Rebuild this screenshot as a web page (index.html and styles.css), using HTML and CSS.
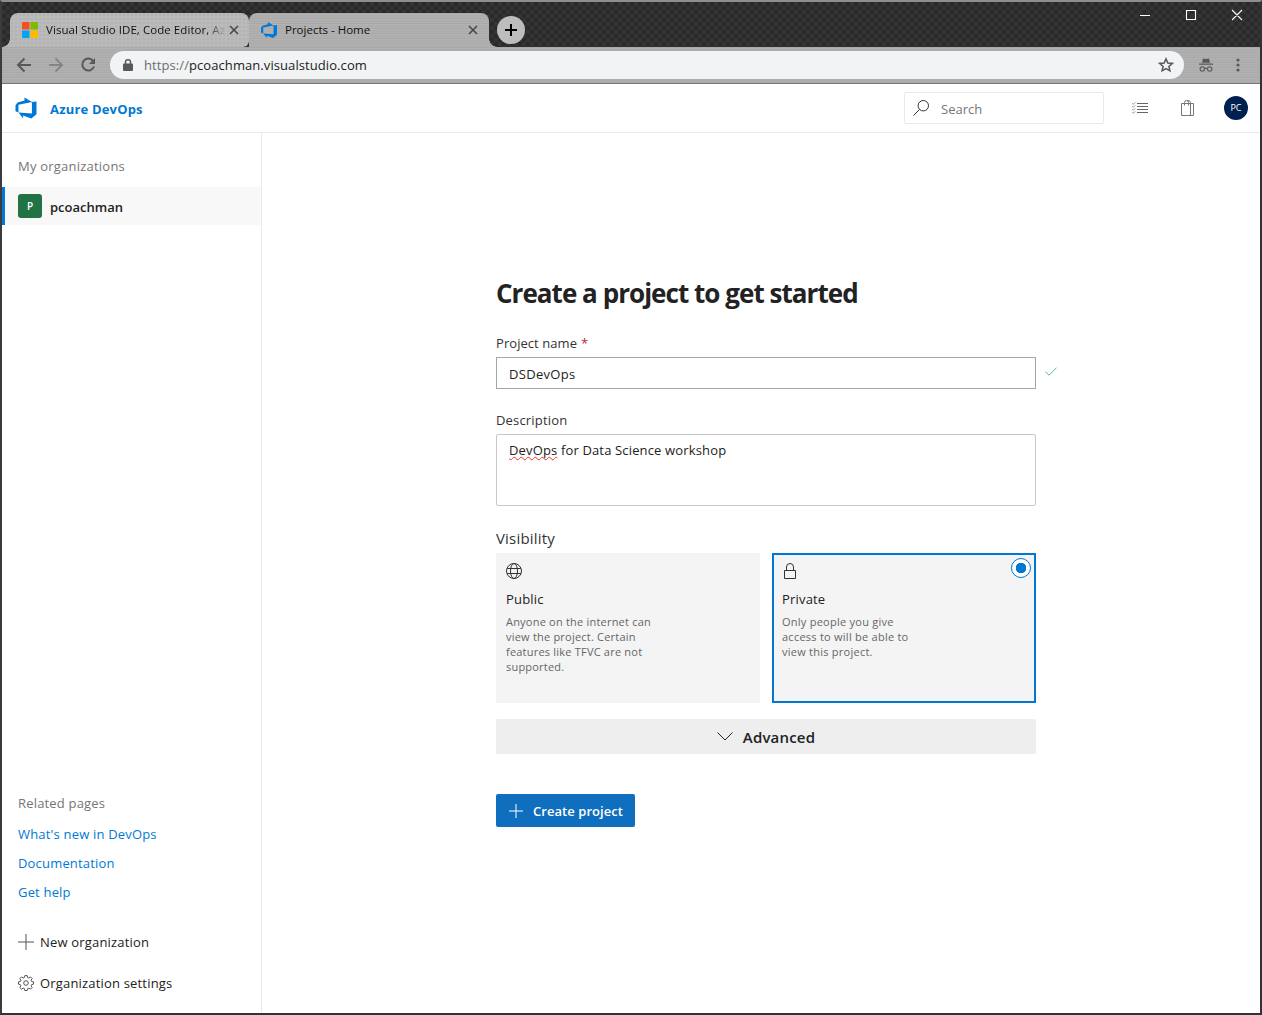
FILE: index.html
```html
<!DOCTYPE html>
<html lang="en">
<head>
<meta charset="utf-8">
<title>Projects - Home</title>
<link rel="stylesheet" href="styles.css">
</head>
<body>
<div class="window">
  <div class="titlebar">
    <div class="tabs">
      <div class="tab tab-inactive">
        <svg class="favicon windows" viewBox="0 0 16 16"><path fill="#f25022" d="M0 0h7.500v7.500H0z"/><path fill="#7fba00" d="M8.500 0H16v7.500H8.500z"/><path fill="#00a4ef" d="M0 8.500h7.500V16H0z"/><path fill="#ffb900" d="M8.500 8.500H16V16H8.500z"/></svg>
        <span class="tab-title tab-title-fade">Visual Studio IDE, Code Editor, Az</span>
        <svg class="tab-close" viewBox="0 0 10 10"><path d="M1 1l8 8M9 1l-8 8"/></svg>
      </div>
      <div class="tab tab-active">
        <svg class="favicon devops" viewBox="1 1 14 14"><path d="M15 3.622v8.512L11.5 15l-5.425-1.975v1.958L3.004 10.97l8.951.7V4.005L15 3.622zm-2.984.428L6.994 1v2.001L2.382 4.356 1 6.13v4.029l1.978.873V5.869l9.038-1.818z"/></svg>
        <span class="tab-title">Projects - Home</span>
        <svg class="tab-close" viewBox="0 0 10 10"><path d="M1 1l8 8M9 1l-8 8"/></svg>
      </div>
      <div class="new-tab"><svg viewBox="0 0 12 12"><path d="M6 0v12M0 6h12"/></svg></div>
    </div>
    <svg class="controls" viewBox="0 0 104 12"><path d="M1 6.500h10M47.500 1.500h9v9h-9zM93 1l10 10M103 1l-10 10"/></svg>
  </div>

  <div class="toolbar">
    <svg class="nav-icon" viewBox="0 0 16 16"><path d="M15 8H2M8.500 1.500L2 8l6.500 6.500"/></svg>
    <svg class="nav-icon nav-disabled" viewBox="0 0 16 16"><path d="M1 8h13M7.500 1.500L14 8l-6.500 6.500"/></svg>
    <svg class="nav-icon" viewBox="0 0 16 16"><path d="M13.300 4.200A6 6 0 1 0 14 9.500"/><path class="solid" d="M15 1v6H9z"/></svg>
    <div class="address">
      <svg class="lock" viewBox="0 0 10 12"><path class="solid" d="M1 4.500h8q1 0 1 1V11q0 1-1 1H1q-1 0-1-1V5.500q0-1 1-1z"/><path d="M2.500 5V3a2.500 2.200 0 0 1 5 0v2"/></svg>
      <span class="url"><span class="scheme">https://</span>pcoachman.visualstudio.com</span>
      <svg class="star" viewBox="0 0 16 16"><path d="M8 1.800l1.800 4.200 4.500.4-3.400 3 1 4.400L8 11.500l-3.900 2.300 1-4.400-3.400-3 4.500-.4z"/></svg>
    </div>
    <svg class="incognito" viewBox="0 0 14 14"><path class="solid" d="M4 .5l3 .6 3-.6 1 4.300H3zM0 5.500h14v1.200H0z"/><circle cx="3.300" cy="11" r="2.200"/><circle cx="10.700" cy="11" r="2.200"/><path d="M5.500 10.600q1.500-.8 3 0"/></svg>
    <svg class="kebab" viewBox="0 0 4 14"><circle cx="2" cy="2" r="1.600"/><circle cx="2" cy="7" r="1.600"/><circle cx="2" cy="12" r="1.600"/></svg>
  </div>

  <div class="header">
    <svg class="logo devops" viewBox="0 0 16 16"><path d="M15 3.622v8.512L11.5 15l-5.425-1.975v1.958L3.004 10.97l8.951.7V4.005L15 3.622zm-2.984.428L6.994 1v2.001L2.382 4.356 1 6.130v4.029l1.978.873V5.869l9.038-1.818z"/></svg>
    <span class="brand">Azure DevOps</span>
    <div class="search">
      <svg viewBox="0 0 16 16"><circle cx="10.300" cy="5.700" r="5.200"/><path d="M6.500 9.500L.4 15.600"/></svg>
      <span>Search</span>
    </div>
    <svg class="tasks" viewBox="0 0 16 12"><path d="M5 1.500h11M5 4.500h11M5 7.500h11M5 10.500h11"/><path class="ticks" d="M.3 1.300l1 1L3.300.3M.3 4.300l1 1 2-2M.3 7.300l1 1 2-2M.3 10.300l1 1 2-2"/></svg>
    <svg class="bag" viewBox="0 0 14 16"><path d="M.5 3.500h12v12H.5zM9.500 3.500v12M3.500 5.500V2.500a2 2 0 0 1 4 0v3M6 .7q3.500-.8 3.500 2v1"/></svg>
    <span class="avatar">PC</span>
  </div>

  <div class="body">
    <div class="sidebar">
      <div class="side-title">My organizations</div>
      <div class="org"><span class="org-tile">P</span><span class="org-name">pcoachman</span></div>
      <div class="side-bottom">
        <div class="side-related">Related pages</div>
        <a class="side-link">What's new in DevOps</a>
        <a class="side-link">Documentation</a>
        <a class="side-link">Get help</a>
        <div class="side-action new-org"><svg viewBox="0 0 16 16"><path d="M8 0v16M0 8h16"/></svg><span>New organization</span></div>
        <div class="side-action"><svg viewBox="0 0 16 16"><path d="M6.800.6h2.400l.4 1.900 1.300.5 1.600-1.100 1.700 1.700-1.100 1.600.5 1.300 1.900.4v2.300l-1.900.4-.5 1.300 1.100 1.600-1.700 1.700-1.600-1.100-1.300.5-.4 1.900H6.800l-.4-1.900-1.300-.5-1.600 1.100-1.700-1.700 1.100-1.600-.5-1.300-1.900-.4V6.900l1.900-.4.5-1.300-1.100-1.600 1.700-1.700L5.100 3l1.300-.5z"/><circle cx="8" cy="8" r="2.300"/></svg><span>Organization settings</span></div>
      </div>
    </div>

    <div class="content">
      <div class="form">
        <h1>Create a project to get started</h1>
        <div class="label label-name"><span>Project name</span><span class="required">*</span></div>
        <div class="name-row">
          <div class="input">DSDevOps</div>
          <svg class="check" viewBox="0 0 12 9"><path d="M.5 4.700L4 8.200 11.500.7"/></svg>
        </div>
        <div class="label">Description</div>
        <div class="textarea"><span class="misspelled">DevOps</span> for Data Science workshop</div>
        <div class="label label-large">Visibility</div>
        <div class="cards">
          <div class="card">
            <svg viewBox="0 0 16 16"><circle cx="8" cy="8" r="7.500"/><ellipse cx="8" cy="8" rx="3.500" ry="7.500"/><path d="M1.200 5.500h13.600M1.200 10.500h13.600"/></svg>
            <div class="card-title">Public</div>
            <div class="card-text">Anyone on the internet can view the project. Certain features like TFVC are not supported.</div>
          </div>
          <div class="card card-selected">
            <svg viewBox="0 0 16 16"><path d="M2.500 7.500h11v8h-11zM4.500 7.500V4a3.500 3.500 0 0 1 7 0v3.500"/></svg>
            <div class="card-title">Private</div>
            <div class="card-text">Only people you give access to will be able to view this project.</div>
            <span class="radio"></span>
          </div>
        </div>
        <div class="advanced"><svg viewBox="0 0 16 9"><path d="M.5.5L8 8 15.500.5"/></svg><span>Advanced</span></div>
        <div class="create"><svg viewBox="0 0 14 14"><path d="M7 0v14M0 7h14"/></svg><span>Create project</span></div>
      </div>
    </div>
  </div>
</div>
</body>
</html>
```
FILE: styles.css
```css
* { box-sizing: border-box; }
body { margin: 0; font-family: "Open Sans", "Noto Sans", sans-serif; font-size: 13px; letter-spacing: 0.18px; color: #222; }
svg { display: block; flex: none; fill: none; stroke: currentColor; }

.window { width: 1262px; height: 1015px; display: flex; flex-direction: column; background: #fff; border: 2px solid #333235; border-top-color: #8e8e8e; border-left-color: #3b3a3e; overflow: hidden; }

.titlebar { height: 45px; display: flex; justify-content: space-between; padding: 11px 17px 0 8px; background-color: #303030; background-image: repeating-conic-gradient(#2a2a2a 0 25%, #343434 0 50%); background-size: 8px 8px; }
.tabs { display: flex; }
.tab { position: relative; display: flex; align-items: center; height: 34px; padding: 0 11px 0 12px; border-radius: 8px 8px 0 0; color: #111; font-size: 11.500px; letter-spacing: 0; }
.tab-inactive { width: 239px; padding-right: 10px; border-bottom-right-radius: 6px; background-color: #bababa; background-image: radial-gradient(#b2b2b2 0.8px, transparent 1px); background-size: 4px 4px; }
.tab-active { width: 240px; background: repeating-linear-gradient(#a9a9a9 0 1px, #b2b2b2 1px 2px, #adadad 2px 4px, #b0b0b0 4px 5px); }
.tab-inactive::before, .tab-active::after { content: ""; position: absolute; bottom: 0; width: 8px; height: 8px; }
.tab-inactive::before { left: -8px; background: radial-gradient(circle at 0 0, transparent 7.500px, #b8b8b8 8px); }
.tab-active::after { right: -8px; background: radial-gradient(circle at 100% 0, transparent 7.500px, #adadad 8px); }
.favicon { width: 16px; height: 16px; }
.windows { stroke: none; }
.devops { fill: #0078d7; stroke: none; }
.tab-title { flex: 1; margin: -2px 8px 0; white-space: nowrap; }
.tab-title-fade { margin-right: 2px; letter-spacing: 0.06px; -webkit-mask-image: linear-gradient(90deg, #000 88%, transparent 100%); mask-image: linear-gradient(90deg, #000 88%, transparent 100%); }
.tab-close { width: 10px; height: 10px; stroke: #444; stroke-width: 1.500; }
.new-tab { width: 28px; height: 28px; margin: 3px 0 0 8px; border-radius: 50%; background: #bdbdbd; display: flex; align-items: center; justify-content: center; color: #000; }
.new-tab svg { width: 12px; height: 12px; stroke-width: 2; }
.controls { width: 104px; height: 12px; margin-top: -4px; color: #fff; stroke-width: 1.100; }

.toolbar { height: 37px; display: flex; align-items: center; padding-left: 14px; color: #55585c; background: repeating-linear-gradient(#a9a9a9 0 1px, #b2b2b2 1px 2px, #adadad 2px 4px, #b0b0b0 4px 5px); border-bottom: 1px solid #777; }
.nav-icon { width: 16px; height: 16px; margin-right: 16px; stroke-width: 2; }
.nav-disabled { color: #858585; }
.solid { fill: currentColor; stroke: none; }
.address { width: 1074px; height: 28px; margin-left: -2px; padding: 0 10px 0 13px; border-radius: 14px; background: #f1f3f4; display: flex; align-items: center; }
.lock { width: 10px; height: 12px; stroke-width: 1.500; }
.url { margin-left: 11px; letter-spacing: 0.08px; color: #222; }
.scheme { color: #6b6e72; }
.star { width: 16px; height: 16px; margin-left: auto; stroke-width: 1.500; }
.incognito { width: 14px; height: 14px; margin-left: 15px; stroke-width: 1.100; }
.kebab { width: 4px; height: 14px; margin-left: 23px; fill: currentColor; stroke: none; }

.header { height: 49px; flex: none; display: flex; align-items: center; padding: 0 12px; border-bottom: 1px solid #eaeaea; }
.logo { width: 24px; height: 24px; }
.brand { margin-left: 12px; padding-top: 2px; font-weight: 700; color: #0078d4; }
.search { width: 200px; height: 32px; margin-left: auto; padding-left: 8px; display: flex; align-items: center; gap: 12px; border: 1px solid #eaeaea; border-radius: 2px; letter-spacing: 0; color: #767676; }
.search span { padding-top: 2px; }
.search svg { width: 16px; height: 16px; color: #333; }
.tasks { width: 16px; height: 12px; margin-left: 28px; color: #666; }
.ticks { stroke-width: 0.700; }
.bag { width: 14px; height: 16px; margin-left: 33px; color: #777; }
.avatar { width: 24px; height: 24px; margin-left: 29px; border-radius: 50%; background: #002050; color: #fff; font-size: 9px; letter-spacing: 0; line-height: 24px; text-align: center; }

.body { flex: 1; display: flex; min-height: 0; }
.sidebar { width: 260px; border-right: 1px solid #eaeaea; display: flex; flex-direction: column; }
.side-title { padding: 24px 16px 12px; line-height: 18px; letter-spacing: 0.22px; color: #767676; }
.org { height: 38px; display: flex; align-items: center; gap: 8px; padding-left: 13px; border-left: 3px solid #0078d4; background: #f8f8f8; font-weight: 600; letter-spacing: 0; color: #222; }
.org-name { padding-top: 2px; }
.org-tile { width: 24px; height: 24px; border-radius: 3px; background: #217346; color: #fff; font-size: 10px; line-height: 24px; text-align: center; }
.side-bottom { margin-top: auto; padding: 0 16px 20px; display: flex; flex-direction: column; }
.side-related { height: 31px; line-height: 20px; color: #767676; }
.side-link { height: 29px; line-height: 20px; color: #0078d4; }
.side-action { display: flex; align-items: center; gap: 6px; height: 20px; }
.side-action svg { width: 16px; height: 16px; color: #555; }
.new-org { margin: 21px 0; }

.content { flex: 1; padding: 143px 0 0 234px; }
.form { width: 540px; display: flex; flex-direction: column; }
h1 { margin: 0; font-size: 26px; line-height: 34px; font-weight: 700; letter-spacing: -0.96px; white-space: nowrap; color: #222; }
.label { height: 24px; margin-top: 21px; line-height: 20px; display: flex; gap: 4px; color: #333; }
.label-name { margin-top: 23px; letter-spacing: 0.06px; }
.required { color: #b4262c; }
.name-row { display: flex; align-items: center; gap: 9px; }
.input { flex: none; width: 540px; height: 32px; padding: 0 12px; border: 1px solid #a6a6a6; line-height: 32px; letter-spacing: 0.3px; }
.check { width: 12px; height: 9px; margin-top: -3px; color: #55b5a5; }
.textarea { height: 72px; padding: 5px 12px; border: 1px solid #c8c8c8; border-radius: 2px; line-height: 20px; letter-spacing: 0.15px; }
.misspelled { text-decoration: underline wavy #e33 1px; text-underline-offset: 1px; text-decoration-skip-ink: none; }
.label-large { font-size: 15px; height: 25px; margin-top: 22px; }
.cards { display: flex; gap: 12px; }
.card { position: relative; width: 264px; height: 150px; padding: 10px; background: #f4f4f4; }
.card-selected { padding: 8px; border: 2px solid #0078d4; }
.card svg { width: 16px; height: 16px; color: #333; }
.card-title { margin-top: 10px; line-height: 20px; }
.card-text { width: 150px; margin-top: 5px; font-size: 11px; letter-spacing: 0.21px; line-height: 15px; color: #666; }
.card-selected .card-text { width: 140px; letter-spacing: 0.25px; }
.radio { position: absolute; top: 3px; right: 3px; width: 20px; height: 20px; border: 1px solid #0078d4; border-radius: 50%; background: radial-gradient(circle, #0078d4 5px, #fff 5.500px); }
.advanced { height: 35px; margin-top: 16px; display: flex; align-items: center; justify-content: center; gap: 10px; border-radius: 2px; background: #eee; font-size: 15px; font-weight: 600; }
.advanced svg { width: 16px; height: 9px; }
.create { width: 139px; height: 33px; margin-top: 40px; padding-left: 13px; display: flex; align-items: center; gap: 10px; border-radius: 2px; background: #106ebe; color: #fff; font-weight: 600; letter-spacing: 0.05px; }
.create svg { width: 14px; height: 14px; }
```
